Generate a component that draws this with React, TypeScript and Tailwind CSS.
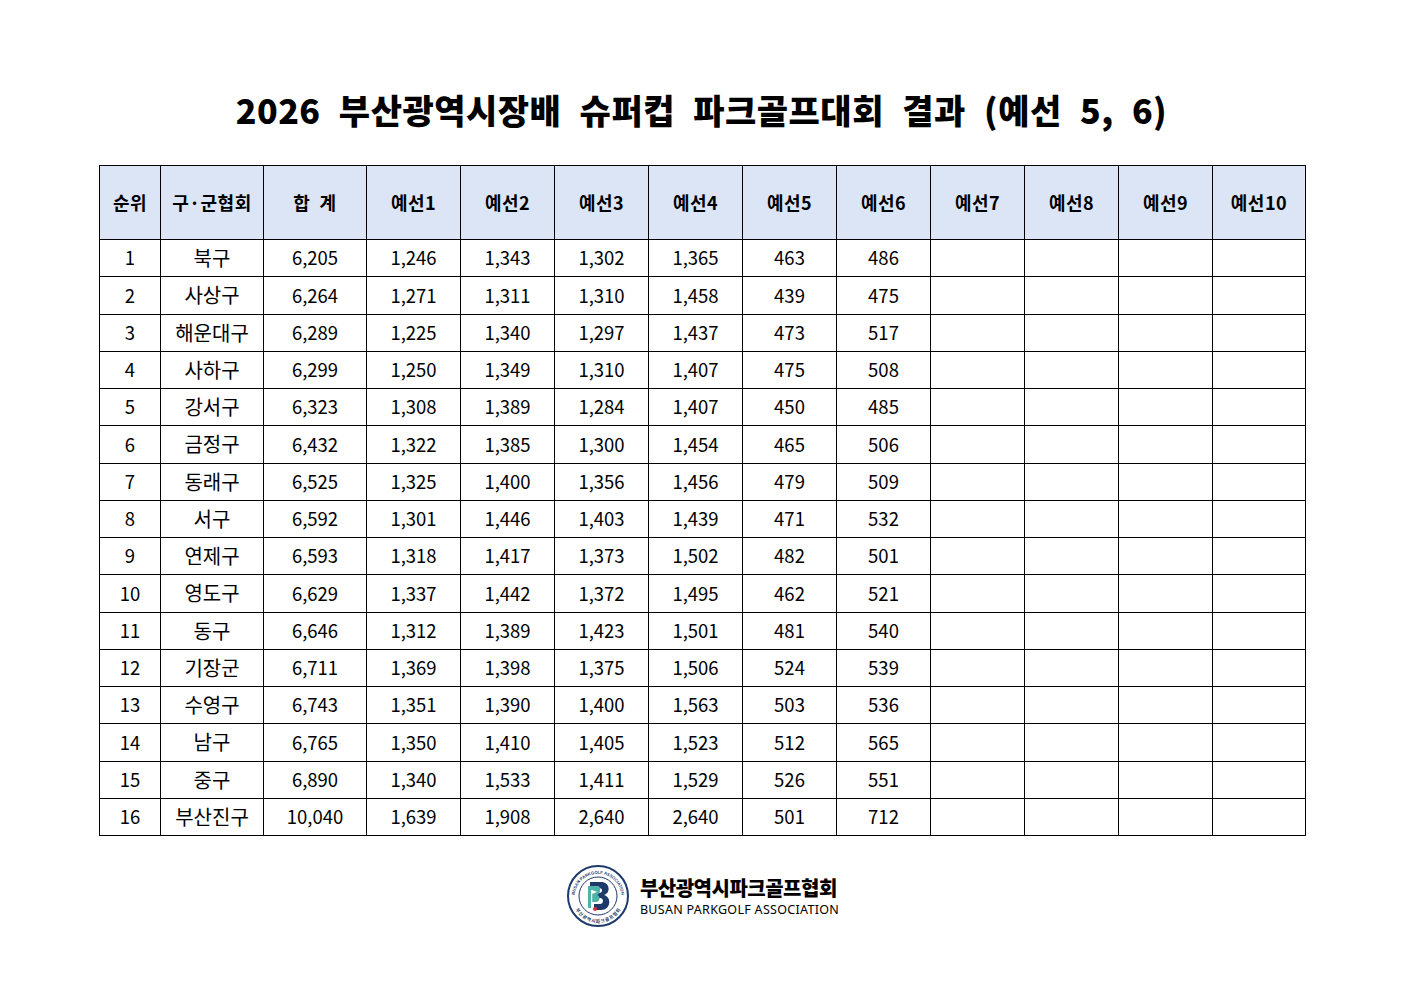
import React from 'react';

const rows: [number, string, string, string, string, string, string, string, string][] = [
  [1, '북구', '6,205', '1,246', '1,343', '1,302', '1,365', '463', '486'],
  [2, '사상구', '6,264', '1,271', '1,311', '1,310', '1,458', '439', '475'],
  [3, '해운대구', '6,289', '1,225', '1,340', '1,297', '1,437', '473', '517'],
  [4, '사하구', '6,299', '1,250', '1,349', '1,310', '1,407', '475', '508'],
  [5, '강서구', '6,323', '1,308', '1,389', '1,284', '1,407', '450', '485'],
  [6, '금정구', '6,432', '1,322', '1,385', '1,300', '1,454', '465', '506'],
  [7, '동래구', '6,525', '1,325', '1,400', '1,356', '1,456', '479', '509'],
  [8, '서구', '6,592', '1,301', '1,446', '1,403', '1,439', '471', '532'],
  [9, '연제구', '6,593', '1,318', '1,417', '1,373', '1,502', '482', '501'],
  [10, '영도구', '6,629', '1,337', '1,442', '1,372', '1,495', '462', '521'],
  [11, '동구', '6,646', '1,312', '1,389', '1,423', '1,501', '481', '540'],
  [12, '기장군', '6,711', '1,369', '1,398', '1,375', '1,506', '524', '539'],
  [13, '수영구', '6,743', '1,351', '1,390', '1,400', '1,563', '503', '536'],
  [14, '남구', '6,765', '1,350', '1,410', '1,405', '1,523', '512', '565'],
  [15, '중구', '6,890', '1,340', '1,533', '1,411', '1,529', '526', '551'],
  [16, '부산진구', '10,040', '1,639', '1,908', '2,640', '2,640', '501', '712'],
];

const headers = ['순위', '구·군협회', '합  계', '예선1', '예선2', '예선3', '예선4', '예선5', '예선6', '예선7', '예선8', '예선9', '예선10'];
const widths = [61, 103, 103, 94, 94, 94, 94, 94, 94, 94, 94, 94, 93];

// round association badge, drawn roughly
function Logo() {
  return (
    <svg width="64" height="64" viewBox="0 0 64 64">
      <defs>
        <path id="topArc" d="M 9.5 40 A 23.5 23.5 0 1 1 54.5 40" />
        <path id="botArc" d="M 11 38 A 21.5 21.5 0 0 0 53 38" />
      </defs>
      <circle cx="32" cy="32" r="30" fill="#fff" stroke="#1d3a6b" strokeWidth="2" />
      <circle cx="32" cy="32" r="19" fill="#fff" stroke="#1d3a6b" strokeWidth="1" />
      <text fontSize="4.2" fill="#1d3a6b" fontFamily="'Liberation Sans', sans-serif" fontWeight="700">
        <textPath href="#topArc" startOffset="50%" textAnchor="middle">BUSAN PARKGOLF ASSOCIATION</textPath>
      </text>
      <text fontSize="4.6" fill="#1d3a6b" fontFamily="'Noto Sans CJK KR', sans-serif" fontWeight="700">
        <textPath href="#botArc" startOffset="50%" textAnchor="middle" dominantBaseline="hanging">부산광역시파크골프협회</textPath>
      </text>
      <path d="M24 18 H35 C44 18 45 29 38 31 C46 33 45 46 35 46 H28 V40 H34 C38 40 38 34 34 34 H30 V29 H33 C37 29 37 24 33 24 H24 Z" fill="#1d3a6b" />
      <path d="M22 22 H32 C35 22 35 30 31 31 C35 32 34 38 30 38 H26 V44 H22 Z" fill="#4fb3a9" />
      <rect x="25" y="26" width="1.2" height="18" fill="#fff" />
      <path d="M26 26 L31 28 L26 30 Z" fill="#fff" />
      <circle cx="29" cy="45" r="2" fill="#e0332f" />
    </svg>
  );
}

export default function App() {
  return (
    <div className="w-[1403px] min-h-[992px] bg-white flex flex-col items-center text-black">
      <h1
        className="mt-[86px] h-[48px] text-[34px] leading-[48px] font-extrabold tracking-[0.5px] [word-spacing:10px]"
        style={{ fontFamily: "'Noto Sans CJK KR', 'Noto Sans', sans-serif" }}
      >
        2026 부산광역시장배 슈퍼컵 파크골프대회 결과 (예선 5, 6)
      </h1>

      <table
        className="mt-[31px] ml-[2px] border-collapse table-fixed w-[1207px]"
        style={{ fontFamily: "'Noto Sans CJK KR', 'Noto Sans', sans-serif" }}
      >
        <colgroup>
          {widths.map((w, i) => (
            <col key={i} style={{ width: w }} />
          ))}
        </colgroup>
        <thead>
          <tr className="h-[74px] bg-[#dbe5f6]">
            {headers.map((h) => (
              <th key={h} className="border border-black text-[18px] font-bold whitespace-pre p-0 tracking-[0.5px]">
                {h}
              </th>
            ))}
          </tr>
        </thead>
        <tbody>
          {rows.map((r) => (
            <tr key={r[0]} className="h-[37.25px]">
              {r.map((c, i) => (
                <td key={i} className={`border border-black text-center p-0 ${i === 1 ? 'text-[20px]' : 'text-[18.5px]'}`}>
                  {c}
                </td>
              ))}
              {[0, 1, 2, 3].map((k) => (
                <td key={`e${k}`} className="border border-black p-0" />
              ))}
            </tr>
          ))}
        </tbody>
      </table>

      <div className="mt-[28px] flex items-center gap-[10px] ml-[2px]">
        <Logo />
        <div className="flex flex-col gap-[2px]">
          <span
            className="text-[20px] leading-[24px] font-black tracking-[-0.5px]"
            style={{ fontFamily: "'Noto Sans CJK KR', sans-serif" }}
          >
            부산광역시파크골프협회
          </span>
          <span
            className="text-[12.5px] leading-[15px] tracking-[0.3px]"
            style={{ fontFamily: "'Noto Sans', 'Liberation Sans', sans-serif" }}
          >
            BUSAN PARKGOLF ASSOCIATION
          </span>
        </div>
      </div>
    </div>
  );
}
